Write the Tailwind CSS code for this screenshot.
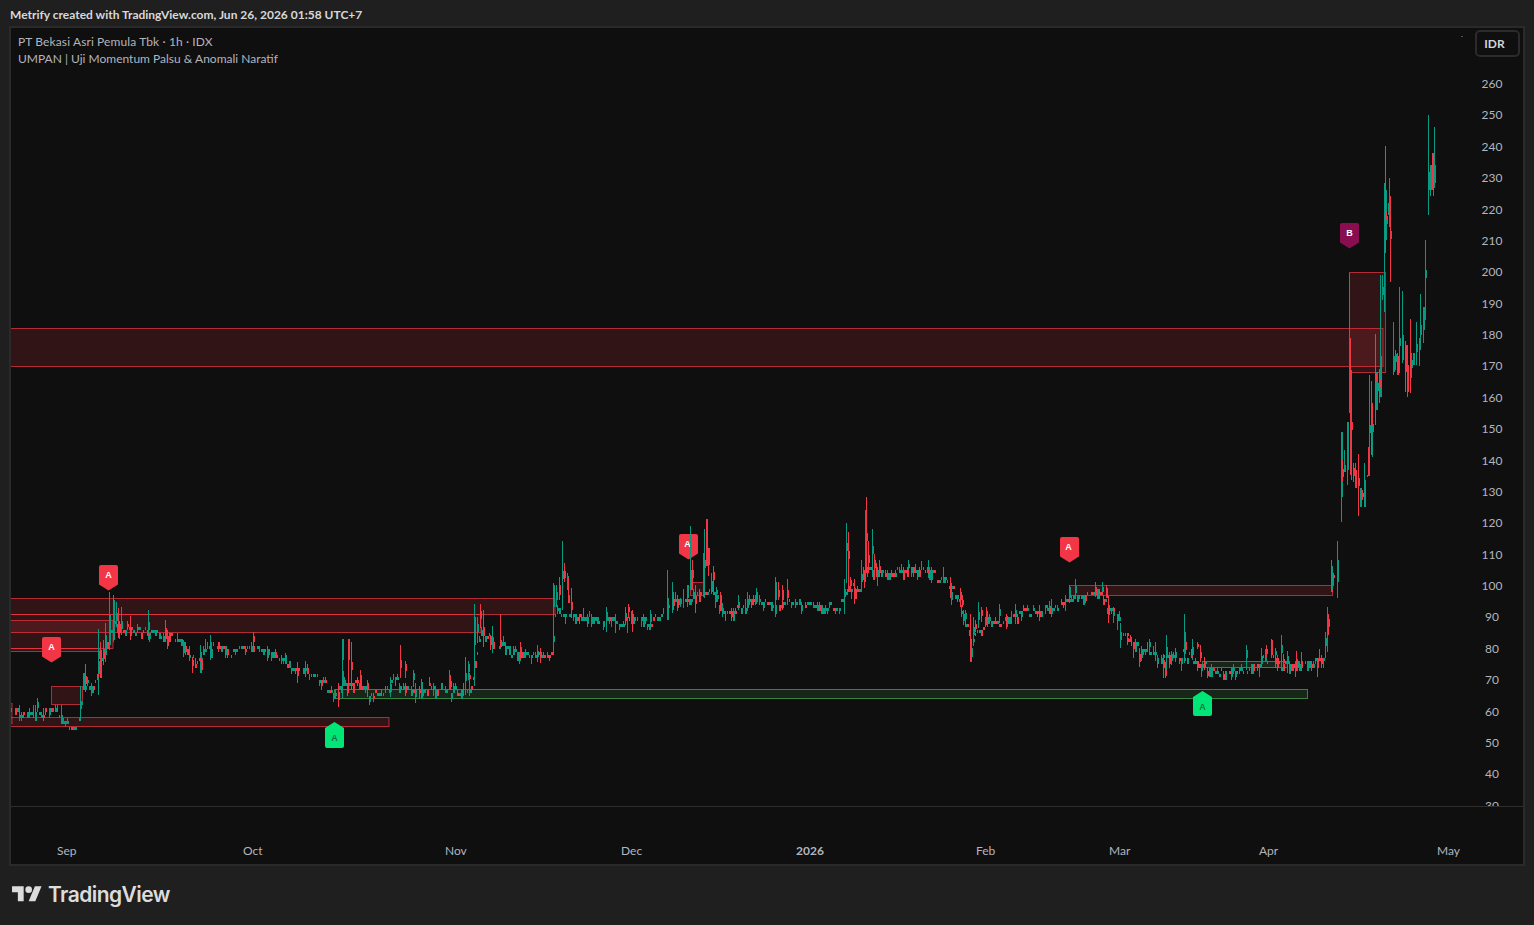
<!doctype html>
<html>
<head>
<meta charset="utf-8">
<script src="https://cdn.jsdelivr.net/npm/@tailwindcss/browser@4"></script>
</head>
<body class="w-[1534px] h-[925px] overflow-hidden bg-[#1f1f1f] font-['Lato',sans-serif] text-[12px]">
<div class="flex flex-col h-[925px]">
  <header class="h-[26px] pl-[10px] pt-[6px] text-[12px] leading-[18px] font-bold text-[#d8d8d8]">Metrify created with TradingView.com, Jun 26, 2026 01:58 UTC+7</header>

  <main class="ml-[9px] w-[1516px] h-[840px] border-2 border-[#2a2a2a] bg-[#0f0f0f] flex flex-col">
    <section class="relative h-[779px] border-b border-[#2e2e2e] overflow-hidden">
      <svg class="absolute inset-0" width="1512" height="778" viewBox="11 28 1512 778" fill="none">
        <g class="fill-[#f23645]/15 stroke-[#f23645]/70" id="zones">
          <rect x="1" y="328.5" width="1382" height="38"/>
          <rect x="1349.5" y="272.5" width="36" height="100"/>
          <rect x="1" y="598.5" width="554" height="16"/>
          <rect x="1" y="614.5" width="480" height="18"/>
          <rect x="1" y="620.5" width="112" height="28"/>
          <rect x="1" y="648.5" width="99" height="3"/>
          <rect x="51.5" y="686.5" width="31" height="18"/>
          <rect x="1" y="703.5" width="11" height="20"/>
          <rect x="1" y="717.5" width="388" height="9"/>
          <rect x="1069.5" y="585.5" width="263" height="10"/>
          <rect x="690.5" y="582.5" width="13" height="13"/>
        </g>
        <g class="fill-[#4caf50]/15 stroke-[#4caf50]/70">
          <rect x="334.5" y="689.5" width="973" height="9"/>
          <rect x="1202.5" y="661.5" width="85" height="6"/>
        </g>

        <g class="font-['Liberation_Sans',sans-serif] text-[9px] font-bold" text-anchor="middle">
          <path class="fill-[#f23645]" d="M101 565h15a2 2 0 0 1 2 2v17.500l-9.500 6-9.500-6V567a2 2 0 0 1 2-2z"/>
          <text class="fill-white" x="108.500" y="578">A</text>
          <path class="fill-[#f23645]" d="M44 637h15a2 2 0 0 1 2 2v17.500l-9.500 6-9.500-6V639a2 2 0 0 1 2-2z"/>
          <text class="fill-white" x="51.500" y="650">A</text>
          <path class="fill-[#f23645]" d="M681 534h15a2 2 0 0 1 2 2v17.500l-9.500 6-9.500-6V536a2 2 0 0 1 2-2z"/>
          <text class="fill-white" x="687.500" y="547">A</text>
          <path class="fill-[#f23645]" d="M1062 537h15a2 2 0 0 1 2 2v17.500l-9.500 6-9.500-6V539a2 2 0 0 1 2-2z"/>
          <text class="fill-white" x="1068.500" y="550">A</text>
          <path class="fill-[#880e4f]" d="M1342 223h15a2 2 0 0 1 2 2v17.500l-9.500 6-9.500-6V225a2 2 0 0 1 2-2z"/>
          <text class="fill-white" x="1349.500" y="236">B</text>
          <path class="fill-[#00e676]" d="M327 748h15a2 2 0 0 0 2-2v-18l-9.500-6-9.500 6v18a2 2 0 0 0 2 2z"/>
          <text class="fill-[#1f6b4a]" x="334.500" y="741">A</text>
          <path class="fill-[#00e676]" d="M1195 716h15a2 2 0 0 0 2-2v-17l-9.500-6-9.500 6v17a2 2 0 0 0 2 2z"/>
          <text class="fill-[#1f6b4a]" x="1202.500" y="710">A</text>
        </g>

        <g shape-rendering="crispEdges">
          <path id="tw" class="stroke-[#089981]" stroke-width="1"/>
          <path id="tb" class="stroke-[#089981]" stroke-width="2"/>
          <path id="rw" class="stroke-[#f23645]" stroke-width="1"/>
          <path id="rb" class="stroke-[#f23645]" stroke-width="2"/>
        </g>
      </svg>

      <div class="absolute left-[7px] top-[5px] text-[12px] leading-[17px] text-[#b2b5be]">
        <p class="tracking-[0.11px]">PT Bekasi Asri Pemula Tbk · 1h · IDX</p>
        <p>UMPAN | Uji Momentum Palsu &amp; Anomali Naratif</p>
      </div>

      <div class="absolute left-[1450px] top-[8px] w-[2px] h-[1px] bg-[#4a5068]"></div>
      <div class="absolute left-[1464px] top-[2px] w-[45px] h-[27px] pr-[6px] border-2 border-[#2b2b2b] rounded-[5px] flex items-center justify-center text-[12px] font-bold text-[#d1d4dc]">IDR</div>

      <div class="absolute top-[40.100px] left-[1461px] w-[40px] flex flex-col text-[12px] text-[#b2b5be] items-center">
        <span class="h-[31.380px] leading-[31.380px]">260</span>
        <span class="h-[31.380px] leading-[31.380px]">250</span>
        <span class="h-[31.380px] leading-[31.380px]">240</span>
        <span class="h-[31.380px] leading-[31.380px]">230</span>
        <span class="h-[31.380px] leading-[31.380px]">220</span>
        <span class="h-[31.380px] leading-[31.380px]">210</span>
        <span class="h-[31.380px] leading-[31.380px]">200</span>
        <span class="h-[31.380px] leading-[31.380px]">190</span>
        <span class="h-[31.380px] leading-[31.380px]">180</span>
        <span class="h-[31.380px] leading-[31.380px]">170</span>
        <span class="h-[31.380px] leading-[31.380px]">160</span>
        <span class="h-[31.380px] leading-[31.380px]">150</span>
        <span class="h-[31.380px] leading-[31.380px]">140</span>
        <span class="h-[31.380px] leading-[31.380px]">130</span>
        <span class="h-[31.380px] leading-[31.380px]">120</span>
        <span class="h-[31.380px] leading-[31.380px]">110</span>
        <span class="h-[31.380px] leading-[31.380px]">100</span>
        <span class="h-[31.380px] leading-[31.380px]">90</span>
        <span class="h-[31.380px] leading-[31.380px]">80</span>
        <span class="h-[31.380px] leading-[31.380px]">70</span>
        <span class="h-[31.380px] leading-[31.380px]">60</span>
        <span class="h-[31.380px] leading-[31.380px]">50</span>
        <span class="h-[31.380px] leading-[31.380px]">40</span>
        <span class="h-[31.380px] leading-[31.380px]">30</span>
      </div>
    </section>

    <div class="relative flex-1 text-[12px] text-[#b2b5be]">
      <span class="absolute top-[35px] left-[46px]">Sep</span>
      <span class="absolute top-[35px] left-[232px]">Oct</span>
      <span class="absolute top-[35px] left-[434px]">Nov</span>
      <span class="absolute top-[35px] left-[610px]">Dec</span>
      <span class="absolute top-[35px] left-[785px] font-bold">2026</span>
      <span class="absolute top-[35px] left-[965px]">Feb</span>
      <span class="absolute top-[35px] left-[1098px]">Mar</span>
      <span class="absolute top-[35px] left-[1248px]">Apr</span>
      <span class="absolute top-[35px] left-[1426px]">May</span>
    </div>
  </main>

  <footer class="flex-1 flex items-center pl-[12px] pb-[1px] gap-[6px] text-[#dcdcdc]">
    <svg width="30" height="23.300" viewBox="0 0 36 28" class="fill-[#dcdcdc]">
      <path d="M14 22H7V11H0V4h14v18zM28 22h-8l7.500-18h8L28 22z"/>
      <circle cx="20" cy="8" r="4"/>
    </svg>
    <span class="text-[21px] leading-[24px] font-semibold font-['Inter',sans-serif] tracking-[-0.55px]">TradingView</span>
  </footer>
</div>

<script>
(function(){
var anchors=[[11,712],[45,710],[52,707],[58,712],[64,720],[72,727],[78,722],[81,700],[84,683],[92,687],[97,675],[102,655],[108,635],[115,625],[125,628],[150,632],[165,635],[178,637],[186,650],[195,660],[205,650],[215,645],[230,652],[250,642],[265,648],[280,655],[297,668],[310,670],[322,682],[335,693],[343,680],[352,680],[365,690],[380,695],[395,680],[410,687],[430,686],[465,690],[473,680],[480,630],[490,640],[510,650],[530,657],[550,658],[556,610],[572,612],[590,622],[620,620],[650,622],[668,605],[680,600],[700,590],[712,590],[725,610],[740,605],[760,600],[780,605],[800,602],[840,605],[848,585],[858,590],[866,565],[880,572],[900,570],[935,575],[950,583],[958,597],[966,625],[972,640],[985,620],[1000,620],[1020,612],[1060,607],[1072,593],[1100,592],[1108,610],[1118,615],[1121,630],[1135,645],[1165,660],[1190,655],[1205,665],[1212,672],[1245,668],[1265,660],[1290,665],[1322,660],[1326,650]];
/* x, top, bottom, colour (0 teal, 1 red), optional body top, body bottom */
var spikes=[[37,698,712,0],[80,686,720,0],[83,673,690,0,673,690],[85,664,692,1],[98,629,695,0],[100,642,678,1,650,678],[103,640,665,1],[105,623,662,0,635,655],[109,592,650,0,615,645],[113,595,642,0,600,640],[116,602,627,0],[118,608,638,1],[121,607,635,0],[130,616,640,1],[148,610,640,0],[165,620,642,1],[183,640,657,0],[192,657,673,1],[200,645,673,0],[201,660,673,1,660,670],[210,635,660,0],[218,642,652,1],[253,632,648,1],[285,653,660,0],[297,662,683,1],[338,683,707,1],[342,639,698,0,639,660],[348,639,690,1,639,660],[351,642,690,1],[360,670,690,1],[367,680,697,1],[390,677,697,0],[400,645,678,1],[405,661,678,1],[413,670,687,0],[415,683,703,0],
[421,679,698,0],[449,670,690,0],[450,676,690,1],[465,657,695,0],[468,661,680,0],[469,673,684,1],[474,604,686,0,617,645],[477,617,643,0],[480,604,628,1],[483,610,647,1],[490,635,650,1],[492,626,653,0],[500,614,647,1,640,647],[520,642,660,1],[537,645,662,0],[540,648,663,1],[553,583,655,0,585,607],[556,585,607,0],[559,577,600,1,585,595],[562,541,610,0],[564,563,582,1],[567,573,590,0],[568,577,603,1,595,603],[571,588,618,1],
[606,607,632,0],[625,607,625,0],[628,604,618,1],[632,610,632,1],[650,610,628,0],[667,570,620,0,598,620],[672,582,613,0],[673,592,610,1],[680,598,607,0],[687,585,607,0,585,598],[690,526,590,0,570,590],[692,560,590,1],[695,585,613,1],[703,553,597,0,553,590],[704,529,598,0],[706,519,566,1,519,566],[708,548,576,1,548,565],[711,573,594,0],[713,566,595,1],[716,587,597,0],[720,592,611,1],[722,603,617,0],[738,595,610,0],
[756,588,604,0],[775,577,617,0,582,600],[778,582,600,1],[782,585,610,1,590,600],[787,579,605,1],[844,579,614,0],[846,523,583,0],[848,532,592,1],[850,577,592,1],[854,579,604,1],[861,560,592,0],[864,570,588,1],[865,510,577,0],[866,497,573,1],[868,541,573,1],[872,529,577,0],[874,554,576,1],[876,563,577,1],[879,560,577,1],[908,560,570,0],[928,560,578,0],[950,577,598,1],[951,585,605,0],[960,588,607,1],[962,595,607,1],[963,610,625,0],[965,610,625,0],[970,614,662,1,640,662],[971,639,657,0,648,657],[973,617,645,0],[975,620,632,1],[978,602,628,0],[981,607,622,1],[986,607,625,1],[999,604,623,0],[1006,614,629,1],[1015,604,617,0],[1049,601,614,0],
[1069,585,603,0,587,598],[1075,579,597,0],[1085,595,603,1],[1095,582,597,1],[1102,582,595,0],[1106,585,598,1,588,598],[1108,596,623,1],[1113,607,623,0],[1120,623,648,0],[1127,635,645,1],[1130,635,642,1],[1135,639,647,0],[1139,648,667,1],[1149,639,650,0],[1163,654,678,1],[1165,662,678,1],[1166,635,669,0],[1171,651,665,0],[1175,648,662,0],[1184,614,663,0],[1185,635,654,1],[1192,639,660,0],[1197,642,649,1],[1200,645,662,1],[1204,657,670,1],[1207,667,678,1],[1246,645,670,0],[1261,648,667,0],[1266,645,658,1],[1271,639,655,1,640,655],[1275,648,657,0],[1281,635,665,0],[1283,654,665,1],[1287,651,673,0],[1296,651,671,1],
[1325,632,653,0],[1327,607,652,0],[1328,614,635,1],[1331,560,592,1,590,592],[1332,566,592,0],[1333,573,582,1],[1337,541,598,0,560,582],
[1341,432,522,0,432,497],[1342,460,482,1],[1344,450,472,0,465,472],[1347,422,485,0,422,470],[1349,273,413,0],[1350,338,475,1,370,475],[1351,397,480,1],[1353,463,482,1],[1355,463,488,1,470,488],[1358,454,516,1],[1360,488,507,0,488,507],[1362,490,500,1],[1364,463,507,0,480,507],[1367,475,477,0],[1368,447,476,1],[1369,375,476,0],[1371,381,455,1,403,425],[1372,403,457,0],[1375,334,425,1],[1376,372,410,0,393,410],[1377,372,402,0],[1379,369,403,1],[1380,275,397,0,356,397],[1382,275,300,0],[1384,183,312,0,183,200],[1385,146,253,1],[1386,190,240,0],[1389,178,227,0],[1388,203,215,0,203,215],[1390,196,282,1],[1393,322,375,0,356,372],[1395,350,370,0],[1397,353,375,1,356,375],[1399,287,373,0],[1402,291,363,0,335,360],[1405,341,392,1,345,372],[1407,345,397,1,365,392],[1410,319,393,1],[1411,353,378,0],[1413,353,365,0,353,365],[1416,322,365,0],[1419,338,366,0,338,350],[1420,294,350,0,325,335],[1423,307,343,0,307,330],[1425,240,320,0],[1428,115,215,0,172,190],[1430,165,196,0,165,190],[1432,153,190,1,153,190],[1433,165,196,0],[1434,127,183,0,165,183]];

var seed=20260626;
function rnd(){seed=(seed*1664525+1013904223)%4294967296;return seed/4294967296;}
function baseY(x){for(var i=1;i<anchors.length;i++){if(x<=anchors[i][0]){var a=anchors[i-1],b=anchors[i];return a[1]+(b[1]-a[1])*(x-a[0])/(b[0]-a[0]);}}return anchors[anchors.length-1][1];}
var TICK=3.138;
function px(n){return 586+n*TICK;}
var d={tw:"",tb:"",rw:"",rb:""};
function bar(x,t,b,c,bt,bb){
  var w=c?"rw":"tw",k=c?"rb":"tb";
  d[w]+="M"+(x+.5)+" "+Math.round(t)+"V"+Math.round(b);
  if(bt!==undefined){d[k]+="M"+(x+1)+" "+Math.round(bt)+"V"+Math.round(bb);}
}
/* price moves in whole rupiah, so candles sit on discrete levels */
var level=null;
for(var x=11;x<1326;x+=2){
  var target=Math.round((baseY(x)-586)/TICK);
  if(level===null||Math.abs(level-target)>1||rnd()<.4){level=target+Math.floor(rnd()*3)-1;}
  if(rnd()<.08)continue;
  var r=rnd();
  var span=r<.2?0:(r<.75?1:(r<.93?2:3));
  var hi=level,lo=level+span;
  var c=rnd()<.68?0:1;
  var wt=rnd()<.3?1:0,wb=rnd()<.3?1:0;
  if(rnd()<.08)wt+=2;
  if(rnd()<.08)wb+=2;
  if(span===0&&wt===0&&wb===0)wb=1;
  bar(x,px(hi-wt),px(lo+wb),c,px(hi),px(lo));
}
spikes.forEach(function(s){
  var bt=s[4],bb=s[5];
  if(bt===undefined){var len=(s[2]-s[1]);var m=s[1]+len*(.35+rnd()*.3);bt=m-Math.min(4,len*.2);bb=m+Math.min(4,len*.2);}
  bar(s[0],s[1],s[2],s[3],bt,bb);
});
for(var k in d){document.getElementById(k).setAttribute("d",d[k]);}
})();
</script>
</body>
</html>
